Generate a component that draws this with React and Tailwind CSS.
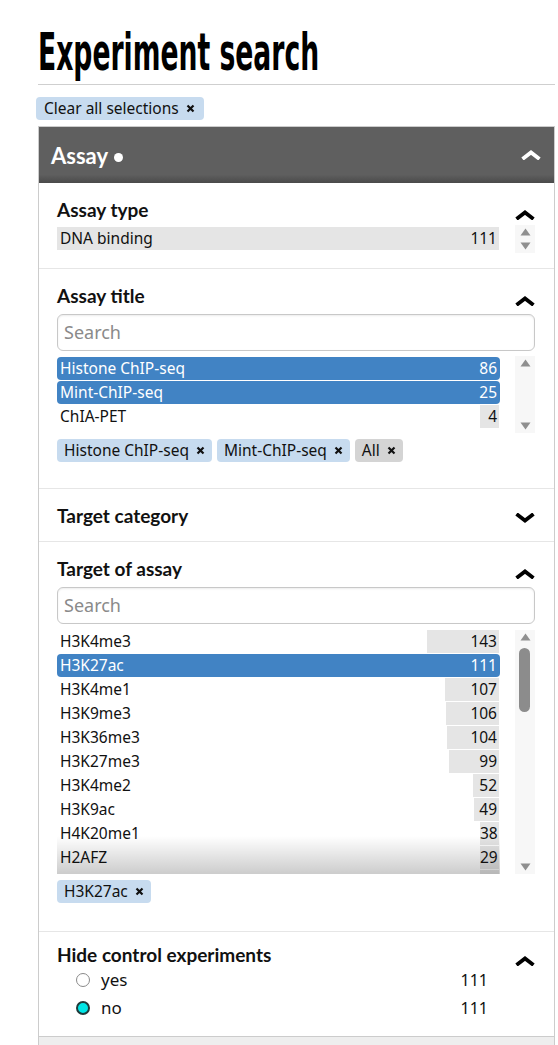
import React from "react";

const Up = ({ color = "#000" }) => (
  <svg width="20" height="10" viewBox="0 0 20 10" className="block">
    <path d="M1.5 9 L10 2.5 L18.5 9" fill="none" stroke={color} strokeWidth="3.8" strokeLinejoin="miter" />
  </svg>
);
const Down = () => (
  <svg width="20" height="10" viewBox="0 0 20 10" className="block">
    <path d="M1.5 1 L10 7.5 L18.5 1" fill="none" stroke="#000" strokeWidth="3.8" strokeLinejoin="miter" />
  </svg>
);
const TriUp = () => (
  <svg width="11" height="8" viewBox="0 0 11 8" className="block">
    <path d="M5.5 0.5 L10.5 7.5 L0.5 7.5 Z" fill="#8f8f8f" />
  </svg>
);
const TriDown = () => (
  <svg width="11" height="8" viewBox="0 0 11 8" className="block">
    <path d="M0.5 0.5 L10.5 0.5 L5.5 7.5 Z" fill="#8f8f8f" />
  </svg>
);
const X = () => (
  <svg width="9" height="9" viewBox="0 0 9 9" className="inline-block">
    <path d="M1.5 1.5 L7.5 7.5 M7.5 1.5 L1.5 7.5" stroke="#111" strokeWidth="2.2" />
  </svg>
);

function Chip({ children, gray }) {
  return (
    <span
      className={`inline-flex items-center h-[23px] px-[7px] gap-[7px] rounded-[4px] text-[15.5px] text-[#111] ${
        gray ? "bg-[#d4d4d4]" : "bg-[#c7dbef]"
      }`}
    >
      {children}
      <X />
    </span>
  );
}

function Row({ label, count, selected, w }) {
  return (
    <div
      className={`flex items-stretch h-[23px] mb-px text-[15.5px] leading-[23px] ${
        selected ? "bg-[#4183c4] text-white rounded-[4px]" : "text-[#111]"
      }`}
    >
      <span className="flex-1 pl-[3px] whitespace-nowrap">{label}</span>
      <span
        className={`text-right pr-[2px] mr-px ${selected ? "" : "bg-[#e5e5e5]"}`}
        style={{ width: w }}
      >
        {count}
      </span>
    </div>
  );
}

function Heading({ title, open = true, drop = 4 }) {
  return (
    <div className="flex justify-between items-start h-[26px]">
      <span className="font-['Lato'] font-bold text-[19px] leading-[26px] text-[#111]">{title}</span>
      <span style={{ marginTop: 9 + drop }}>{open ? <Up /> : <Down />}</span>
    </div>
  );
}

function ScrollCol({ h, thumb }) {
  return (
    <div className="relative w-[20px] ml-[15px] bg-[#f7f7f7] flex flex-col items-center justify-between py-[3px]" style={{ height: h }}>
      <TriUp />
      {thumb && <div className="absolute left-[4px] top-[18px] w-[11px] h-[64px] rounded-full bg-[#8c8c8c]" />}
      <TriDown />
    </div>
  );
}

function Search() {
  return (
    <div className="mt-[5px] h-[37px] border border-[#c8c8c8] rounded-[6px] flex items-center px-[6px] text-[18px] text-[#8a8a8a] shadow-[inset_0_1px_2px_rgba(0,0,0,0.08)]">
      Search
    </div>
  );
}

const targets = [
  ["H3K4me3", 143],
  ["H3K27ac", 111, true],
  ["H3K4me1", 107],
  ["H3K9me3", 106],
  ["H3K36me3", 104],
  ["H3K27me3", 99],
  ["H3K4me2", 52],
  ["H3K9ac", 49],
  ["H4K20me1", 38],
  ["H2AFZ", 29],
];
const barW = (c) => {
  const digits = String(c).length;
  const minW = digits === 3 ? 40 : digits === 2 ? 19 : 12;
  return Math.max(Math.round((c / 143) * 72), minW);
};

export default function App() {
  return (
    <div className="min-h-screen bg-white pl-[38px] pr-[3px] font-['Noto_Sans',sans-serif] text-[#111]">
      <div className="h-[85px] border-b border-[#cfcfcf] relative">
        <h1 className="absolute left-0 top-[23px] origin-left scale-x-[0.58] whitespace-nowrap font-['DejaVu_Sans_Condensed','Liberation_Sans_Narrow','Liberation_Sans',sans-serif] font-bold text-[51px] leading-[60px] text-black">
          Experiment search
        </h1>
      </div>
      <div className="pt-[11px] -ml-[2px]">
        <span className="inline-flex items-center h-[23px] pl-[8px] pr-[9px] gap-[7px] rounded-[4px] bg-[#c7dbef] text-[15.5px]">
          Clear all selections
          <X />
        </span>
      </div>
      <div className="mt-[6px] border border-[#cccccc] border-b-0">
        <div className="h-[56px] bg-[#5f5f5f] bg-linear-to-b from-[#5f5f5f] from-85% to-[#4a4a4a] flex items-center justify-between pl-[12px] pr-[13px]">
          <span className="flex items-center font-['Lato'] font-bold text-[22px] text-white">
            Assay
            <span className="ml-[6px] mt-[4px] w-[9px] h-[9px] rounded-full bg-white inline-block" />
          </span>
          <Up color="#fff" />
        </div>

        {/* Assay type */}
        <div className="pt-[14px] pb-[15px] pl-[18px] pr-[19px] border-b border-[#e6e6e6]">
          <Heading title="Assay type" />
          <div className="flex mt-[2px]">
            <div className="flex-1 pt-[2px]">
              <div className="flex h-[23px] bg-[#e5e5e5] text-[15.5px] leading-[23px] mr-px">
                <span className="flex-1 pl-[3px]">DNA binding</span>
                <span className="pr-[2px]">111</span>
              </div>
            </div>
            <ScrollCol h={28} />
          </div>
        </div>

        {/* Assay title */}
        <div className="pt-[14px] pb-[26px] pl-[18px] pr-[19px] border-b border-[#e6e6e6]">
          <Heading title="Assay title" />
          <Search />
          <div className="flex mt-[5px]">
            <div className="flex-1 pt-px">
              <Row label="Histone ChIP-seq" count="86" selected />
              <Row label="Mint-ChIP-seq" count="25" selected />
              <Row label="ChIA-PET" count="4" w={19} />
            </div>
            <ScrollCol h={77} />
          </div>
          <div className="flex gap-[5px] mt-[6px]">
            <Chip>Histone ChIP-seq</Chip>
            <Chip>Mint-ChIP-seq</Chip>
            <Chip gray>All</Chip>
          </div>
        </div>

        {/* Target category */}
        <div className="pt-[14px] pb-[12px] pl-[18px] pr-[19px] border-b border-[#e6e6e6]">
          <Heading title="Target category" open={false} drop={1} />
        </div>

        {/* Target of assay */}
        <div className="pt-[14px] pb-[28px] pl-[18px] pr-[19px] border-b border-[#e6e6e6]">
          <Heading title="Target of assay" />
          <Search />
          <div className="flex mt-[6px]">
            <div className="relative flex-1 h-[244px] overflow-hidden">
              {targets.map(([l, c, s]) => (
                <Row key={l} label={l} count={c} selected={s} w={barW(c)} />
              ))}
              <Row label="" count="" w={19} />
              <div className="absolute left-0 right-0 bottom-0 h-[38px] bg-linear-to-b from-transparent to-black/20" />
            </div>
            <ScrollCol h={244} thumb />
          </div>
          <div className="flex mt-[6px]">
            <Chip>H3K27ac</Chip>
          </div>
        </div>

        {/* Hide control experiments */}
        <div className="pt-[10px] pb-[14px] pl-[18px] pr-[19px] border-b border-[#cccccc]">
          <Heading title="Hide control experiments" drop={5} />
          <div className="flex items-center h-[28px] -mt-[2px] pl-[19px] pr-[47px] text-[17px]">
            <span className="w-[14px] h-[14px] rounded-full border border-[#8a8a8a] bg-white" />
            <span className="ml-[11px] flex-1">yes</span>
            <span className="text-[16px]">111</span>
          </div>
          <div className="flex items-center h-[28px] pl-[19px] pr-[47px] text-[17px]">
            <span className="w-[14px] h-[14px] rounded-full border-[2px] border-[#1f3a3a] bg-[#00e6e6]" />
            <span className="ml-[11px] flex-1">no</span>
            <span className="text-[16px]">111</span>
          </div>
        </div>
        <div className="h-[20px] bg-[#eeeeee]" />
      </div>
    </div>
  );
}
